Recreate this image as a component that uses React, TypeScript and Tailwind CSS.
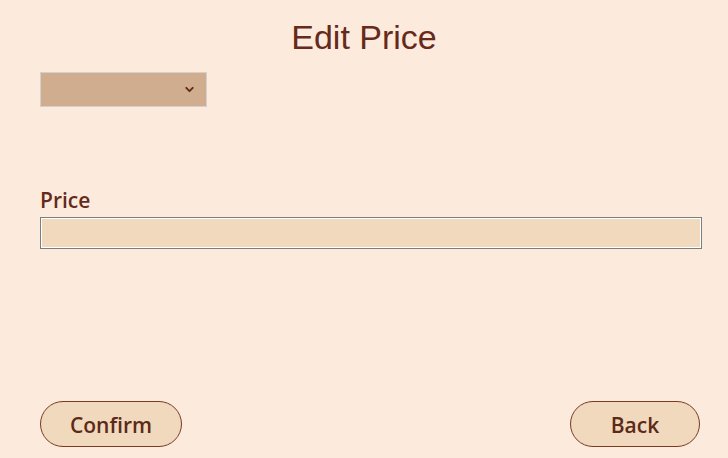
import { ChevronDown } from "lucide-react";

export default function App() {
  return (
    <div className="flex h-[458px] w-[728px] flex-col bg-[#fcebdd] pl-10 pr-[26px] text-[#66291a]">
      <h1 className="mt-[17px] pr-[14px] text-center font-['Liberation_Sans',Arial,sans-serif] text-[34px] leading-[40px]">
        Edit Price
      </h1>

      <div className="mt-[15px] flex h-[35px] w-[167px] items-center justify-end border border-[#d4d0cc] bg-[#cfad8e] pr-[10px]">
        <ChevronDown size={13} strokeWidth={3.5} className="text-[#66291a]" />
      </div>

      <label className="mt-[78px] font-['Open_Sans','Noto_Sans',sans-serif] text-[21px] font-semibold leading-[30px]">
        Price
      </label>
      <div className="mt-[2px] h-[32px] w-[662px] border border-[#7d7d7d] bg-[#f0d9bc] shadow-[inset_0_0_0_1px_#ffffff]" />

      <div className="mt-auto mb-[11px] mr-[2px] flex justify-between font-['Open_Sans','Noto_Sans',sans-serif] text-[21px] font-semibold text-[#5c2a18]">
        <button className="h-[46px] w-[142px] rounded-full border border-[#7a3a24] bg-[#f0d9bc] pt-[3px]">
          Confirm
        </button>
        <button className="h-[46px] w-[130px] rounded-full border border-[#7a3a24] bg-[#f0d9bc] pt-[3px]">
          Back
        </button>
      </div>
    </div>
  );
}
